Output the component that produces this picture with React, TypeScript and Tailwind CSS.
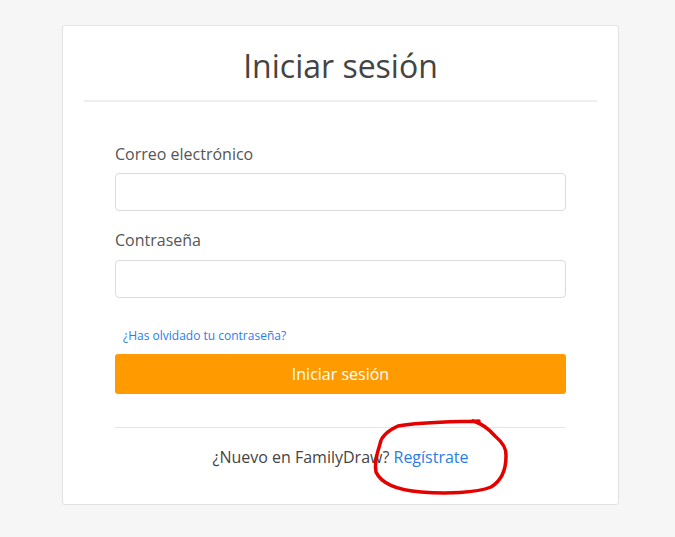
import React from 'react';

export default function App() {
  return (
    <div className="min-h-[537px] w-[675px] bg-[#f6f6f6] pt-[25px] pl-[62px]" style={{ fontFamily: '"Open Sans", sans-serif' }}>
      <div className="relative w-[557px] rounded-[3px] border border-[#e2e2e2] bg-white pb-[35px]">
        {/* Header */}
        <div className="px-[21px] pt-[20px]">
          <h1 className="text-center text-[32px] leading-[40px] text-[#444]">Iniciar sesión</h1>
          <div className="mt-[14px] h-[2px] bg-[#eeeeee]" />
        </div>

        {/* Form */}
        <form className="flex flex-col px-[52px] pt-[40px]" onSubmit={(e) => e.preventDefault()}>
          <label className="text-[16px] leading-[24px] text-[#555]">Correo electrónico</label>
          <input type="email" className="mt-[7px] h-[38px] w-full rounded-[4px] border border-[#dcdcdc] bg-white outline-none" />

          <label className="mt-[17px] text-[16px] leading-[24px] text-[#555]">Contraseña</label>
          <input type="password" className="mt-[8px] h-[38px] w-full rounded-[4px] border border-[#dcdcdc] bg-white outline-none" />

          <a href="#" className="mt-[29px] pl-[8px] text-[12px] leading-[18px] text-[#2b7de9]">¿Has olvidado tu contraseña?</a>

          <button type="submit" className="mt-[9px] h-[40px] w-full rounded-[3px] bg-[#ff9a00] text-[16px] text-white">
            Iniciar sesión
          </button>

          <div className="mt-[33px] h-px bg-[#e6e6e6]" />

          <p className="mt-[17px] text-center text-[16px] leading-[24px] text-[#444]">
            ¿Nuevo en FamilyDraw? <a href="#" className="text-[#2b7de9]">Regístrate</a>
          </p>
        </form>

        {/* Red annotation circle */}
        <svg
          className="pointer-events-none absolute left-[300px] top-[385px]"
          width="160"
          height="100"
          viewBox="362 410 160 100"
          fill="none"
        >
          <path
            d="M478 420 C 455 421, 420 421, 397 425 C 386 430, 380 436, 379 443 C 376 452, 373 462, 375 471 C 380 482, 395 489, 420 491 C 445 493, 475 492, 490 486 C 500 480, 505 470, 505 455 C 506 446, 500 440, 494 435 C 488 428, 482 423, 472 420"
            stroke="#e50000"
            strokeWidth="3.5"
            strokeLinecap="round"
            strokeLinejoin="round"
          />
        </svg>
      </div>
    </div>
  );
}
